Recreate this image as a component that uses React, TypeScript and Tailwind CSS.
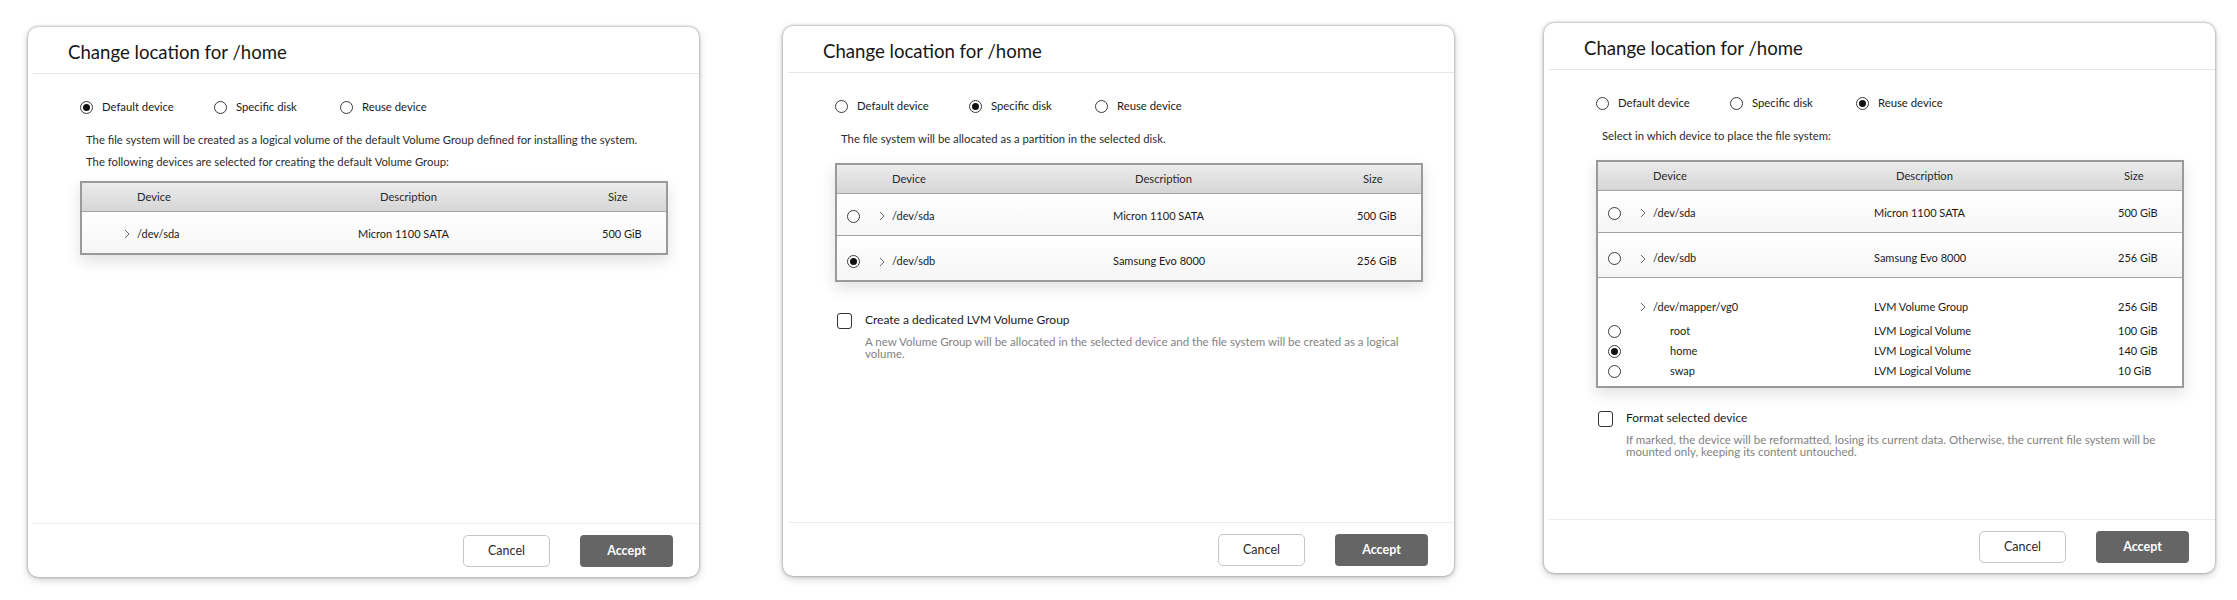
import React from 'react';

type Row = {
    device: string;
    desc: string;
    size: string;
    checked?: boolean;
};

const Radio = ({ checked }: { checked?: boolean }) => (
    <span className="flex h-[13px] w-[13px] shrink-0 items-center justify-center rounded-full border border-[#3a3a3a] bg-white">
        {checked && <span className="h-[7px] w-[7px] rounded-full bg-[#111]" />}
    </span>
);

const Chevron = () => (
    <svg width="6" height="10" viewBox="0 0 6 10" className="shrink-0">
        <path d="M1 1l4 4-4 4" fill="none" stroke="#666" strokeWidth="1" />
    </svg>
);

const Checkbox = () => (
    <span className="mt-[1px] h-[16px] w-[15px] shrink-0 rounded-[3px] border-[1.5px] border-[#333] bg-white" />
);

const cols = 'grid grid-cols-[276px_244px_1fr] items-center';

function TableHeader() {
    return (
        <div className={`${cols} h-[28px] bg-linear-to-b from-[#ececec] to-[#d6d6d6] text-[11.2px] text-[#2a2a2a]`}>
            <span className="pl-[55px]">Device</span>
            <span className="pl-[22px]">Description</span>
            <span className="pl-[6px]">Size</span>
        </div>
    );
}

function DeviceRow({ row, withRadio, tall }: { row: Row; withRadio: boolean; tall?: boolean }) {
    return (
        <div
            className={`${cols} border-t border-[#a3a3a3] bg-linear-to-b from-white to-[#f6f6f6] text-[11px] text-[#1a1a1a] ${
                tall ? 'h-[45px] pt-[7px]' : 'h-[42px] pt-[3px]'
            }`}
        >
            <div className="flex items-center">
                <span className="ml-[10px] w-[13px]">{withRadio && <Radio checked={row.checked} />}</span>
                <span className="ml-[19px]">
                    <Chevron />
                </span>
                <span className="ml-[7px]">{row.device}</span>
            </div>
            <span>{row.desc}</span>
            <span>{row.size}</span>
        </div>
    );
}

function DeviceTable({ rows, withRadio, children }: { rows: Row[]; withRadio: boolean; children?: React.ReactNode }) {
    return (
        <div className="border-2 border-[#9a9a9a] bg-white shadow-[0_6px_14px_rgba(0,0,0,0.12)]">
            <TableHeader />
            {rows.map((r, i) => (
                <DeviceRow key={r.device} row={r} withRadio={withRadio} tall={i > 0} />
            ))}
            {children}
        </div>
    );
}

function LocationOptions({ selected }: { selected: number }) {
    const labels = ['Default device', 'Specific disk', 'Reuse device'];
    const widths = ['w-[134px]', 'w-[126px]', ''];
    return (
        <div className="mt-[25px] flex h-[16px] items-center text-[11.3px] text-[#1a1a1a]">
            {labels.map((l, i) => (
                <label key={l} className={`flex items-center gap-[9px] ${widths[i]}`}>
                    <Radio checked={selected === i} />
                    <span>{l}</span>
                </label>
            ))}
        </div>
    );
}

function Dialog({ className, children }: { className: string; children: React.ReactNode }) {
    return (
        <div
            className={`flex h-[550px] w-[671px] shrink-0 flex-col rounded-[10px] bg-white shadow-[0_0_3px_rgba(0,0,0,0.45),0_3px_8px_rgba(0,0,0,0.18)] ${className}`}
        >
            <div className="h-[46px] pl-[40px] pt-[13px]">
                <h2 className="text-[18.6px] leading-[24px] text-[#161616]">Change location for /home</h2>
            </div>
            <div className="ml-[5px] h-px bg-[#e6e6e6]" />
            <div className="flex-1 pl-[52px] pr-[31px]">{children}</div>
            <div className="ml-[5px] h-[1.5px] bg-[#ececec]" />
            <div className="flex h-[53px] items-start justify-end gap-[30px] pr-[26px] pt-[11px]">
                <button className="h-[32px] w-[87px] rounded-[5px] border border-[#c6c6c6] bg-white text-[12.5px] text-[#2a2a2a]">
                    Cancel
                </button>
                <button className="h-[32px] w-[93px] rounded-[4px] bg-[#656565] text-[12.5px] font-bold text-white">Accept</button>
            </div>
        </div>
    );
}

function OptionCheck({ label, help, className }: { label: string; help: string; className: string }) {
    return (
        <div className={`flex pl-[2px] ${className}`}>
            <Checkbox />
            <div className="ml-[13px]">
                <div className="text-[12px] leading-[16px] text-[#1a1a1a]">{label}</div>
                <p className="mt-[8px] w-[540px] text-[11.5px] leading-[12px] text-[#828282]">{help}</p>
            </div>
        </div>
    );
}

export default function App() {
    const vgParts: Row[] = [
        { device: 'root', desc: 'LVM Logical Volume', size: '100 GiB' },
        { device: 'home', desc: 'LVM Logical Volume', size: '140 GiB', checked: true },
        { device: 'swap', desc: 'LVM Logical Volume', size: '10 GiB' },
    ];

    return (
        <div className="flex min-h-[600px] items-start bg-white font-['Lato','Noto_Sans',sans-serif]">
            {/* Default device */}
            <Dialog className="ml-[28px] mt-[27px]">
                <LocationOptions selected={0} />
                <div className="mt-[14px] pl-[6px] text-[11.3px] leading-[22px] text-[#2b2b2b]">
                    <p>The file system will be created as a logical volume of the default Volume Group defined for installing the system.</p>
                    <p>The following devices are selected for creating the default Volume Group:</p>
                </div>
                <div className="mt-[8px]">
                    <DeviceTable withRadio={false} rows={[{ device: '/dev/sda', desc: 'Micron 1100 SATA', size: '500 GiB' }]} />
                </div>
            </Dialog>

            {/* Specific disk */}
            <Dialog className="ml-[84px] mt-[26px]">
                <LocationOptions selected={1} />
                <p className="mt-[14px] pl-[6px] text-[11.3px] leading-[22px] text-[#2b2b2b]">
                    The file system will be allocated as a partition in the selected disk.
                </p>
                <div className="mt-[13px]">
                    <DeviceTable
                        withRadio
                        rows={[
                            { device: '/dev/sda', desc: 'Micron 1100 SATA', size: '500 GiB' },
                            { device: '/dev/sdb', desc: 'Samsung Evo 8000', size: '256 GiB', checked: true },
                        ]}
                    />
                </div>
                <OptionCheck
                    className="mt-[30px]"
                    label="Create a dedicated LVM Volume Group"
                    help="A new Volume Group will be allocated in the selected device and the file system will be created as a logical volume."
                />
            </Dialog>

            {/* Reuse device */}
            <Dialog className="ml-[90px] mt-[23px]">
                <LocationOptions selected={2} />
                <p className="mt-[14px] pl-[6px] text-[11.3px] leading-[22px] text-[#2b2b2b]">Select in which device to place the file system:</p>
                <div className="mt-[13px]">
                    <DeviceTable
                        withRadio
                        rows={[
                            { device: '/dev/sda', desc: 'Micron 1100 SATA', size: '500 GiB' },
                            { device: '/dev/sdb', desc: 'Samsung Evo 8000', size: '256 GiB' },
                        ]}
                    >
                        <div className="border-t border-[#a3a3a3] bg-white pb-[5px] pt-[19px] text-[11px] text-[#1a1a1a]">
                            <div className={`${cols} mb-[4px] h-[20px]`}>
                                <div className="flex items-center">
                                    <span className="ml-[10px] w-[13px]" />
                                    <span className="ml-[19px]">
                                        <Chevron />
                                    </span>
                                    <span className="ml-[7px]">/dev/mapper/vg0</span>
                                </div>
                                <span>LVM Volume Group</span>
                                <span>256 GiB</span>
                            </div>
                            {vgParts.map((p) => (
                                <div key={p.device} className={`${cols} h-[20px]`}>
                                    <div className="flex items-center">
                                        <span className="ml-[10px]">
                                            <Radio checked={p.checked} />
                                        </span>
                                        <span className="ml-[49px]">{p.device}</span>
                                    </div>
                                    <span>{p.desc}</span>
                                    <span>{p.size}</span>
                                </div>
                            ))}
                        </div>
                    </DeviceTable>
                </div>
                <OptionCheck
                    className="mt-[22px]"
                    label="Format selected device"
                    help="If marked, the device will be reformatted, losing its current data. Otherwise, the current file system will be mounted only, keeping its content untouched."
                />
            </Dialog>
        </div>
    );
}
